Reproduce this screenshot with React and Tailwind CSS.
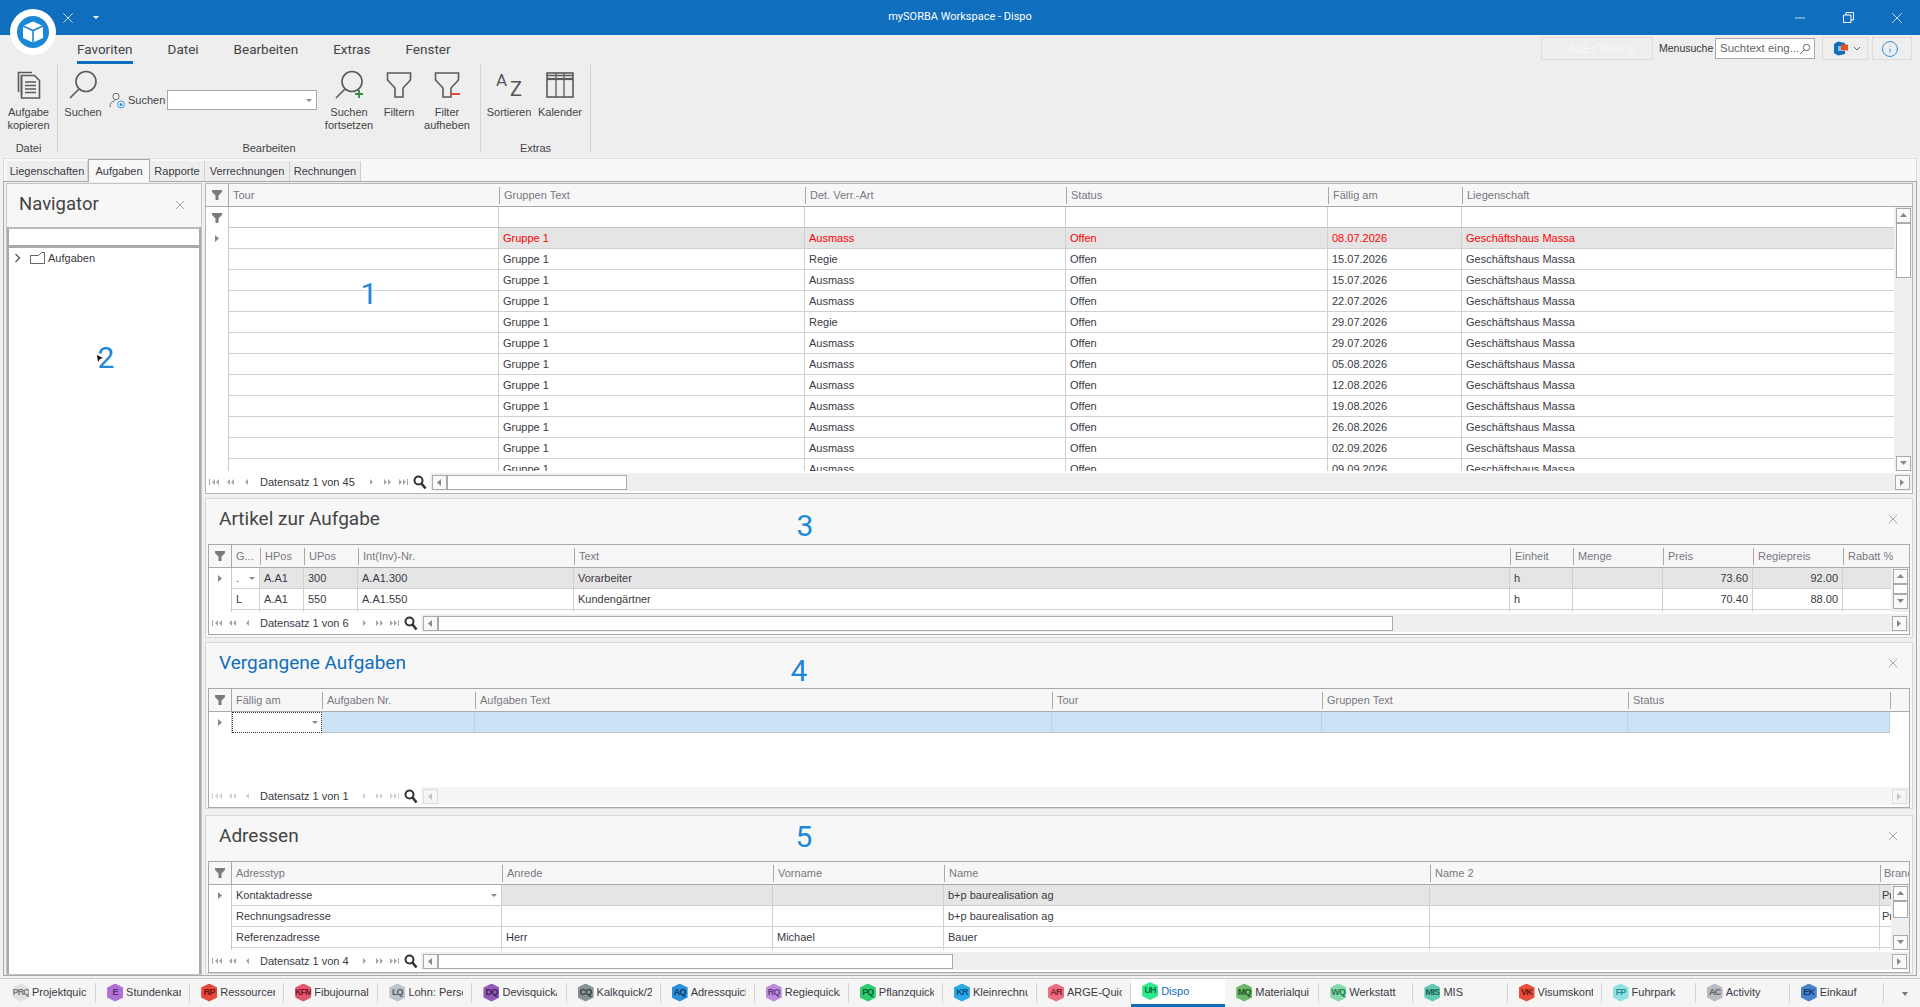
import { Info, Minus, X } from "lucide-react";

const ROW_TEXT = "text-[#3a3a44]";

const BOTTOM_TABS = [
  ["PRQ", "Projektquic", "bg-[#dfe2e5]", "text-[#777]"],
  ["E", "Stundenkar", "bg-[#b071d4]", "text-[#5b2c77]"],
  ["RP", "Ressourcer", "bg-[#e4483a]", "text-[#6b150e]"],
  ["KFM", "Fibujournal", "bg-[#e2566c]", "text-[#7a1526]"],
  ["LQ", "Lohn: Persc", "bg-[#bcc3c9]", "text-[#4e5a63]"],
  ["DQ", "Devisquick/", "bg-[#9259b8]", "text-[#3e1c58]"],
  ["CQ", "Kalkquick/2", "bg-[#869294]", "text-[#2d3a3c]"],
  ["AQ", "Adressquicl", "bg-[#2b90da]", "text-[#0a3a60]"],
  ["RQ", "Regiequick/", "bg-[#bb8cdc]", "text-[#643a84]"],
  ["PQ", "Pflanzquick", "bg-[#2ecc71]", "text-[#0a5c2c]"],
  ["KR", "Kleinrechnu", "bg-[#29a9e8]", "text-[#07507a]"],
  ["AR", "ARGE-Quicl", "bg-[#e96d7d]", "text-[#7c1e2c]"],
  ["UH", "Dispo", "bg-[#2ee88a]", "text-[#07703a]", true],
  ["MQ", "Materialqui", "bg-[#6cb86c]", "text-[#1e5a1e]"],
  ["WQ", "Werkstatt", "bg-[#82d8aa]", "text-[#2a7a50]"],
  ["MIS", "MIS", "bg-[#62c9b2]", "text-[#17664f]"],
  ["VK", "Visumskont", "bg-[#e74c3c]", "text-[#70140b]"],
  ["FP", "Fuhrpark", "bg-[#90e2e2]", "text-[#2a8a8a]"],
  ["AC", "Activity", "bg-[#b9bdc1]", "text-[#5a6066]"],
  ["EK", "Einkauf", "bg-[#4a82ca]", "text-[#123a70]"],
];

const TOUR_COLS = [
  { title: "Tour", w: "w-[270px]" },
  { title: "Gruppen Text", w: "w-[306px]" },
  { title: "Det. Verr.-Art", w: "w-[261px]" },
  { title: "Status", w: "w-[262px]" },
  { title: "Fällig am", w: "w-[134px]" },
  { title: "Liegenschaft", w: "w-[470px]" },
];

const TOUR_ROWS = [
  ["Ausmass", "08.07.2026"],
  ["Regie", "15.07.2026"],
  ["Ausmass", "15.07.2026"],
  ["Ausmass", "22.07.2026"],
  ["Regie", "29.07.2026"],
  ["Ausmass", "29.07.2026"],
  ["Ausmass", "05.08.2026"],
  ["Ausmass", "12.08.2026"],
  ["Ausmass", "19.08.2026"],
  ["Ausmass", "26.08.2026"],
  ["Ausmass", "02.09.2026"],
  ["Ausmass", "09.09.2026"],
].map(([art, date]) => ["", "Gruppe 1", art, "Offen", date, "Geschäftshaus Massa"]);

const ARTICLE_COLS = [
  { title: "G...", w: "w-[28px]" },
  { title: "HPos", w: "w-[44px]" },
  { title: "UPos", w: "w-[54px]" },
  { title: "Int(Inv)-Nr.", w: "w-[216px]" },
  { title: "Text", w: "w-[936px]" },
  { title: "Einheit", w: "w-[63px]" },
  { title: "Menge", w: "w-[90px]" },
  { title: "Preis", w: "w-[90px]", right: true },
  { title: "Regiepreis", w: "w-[90px]", right: true },
  { title: "Rabatt %", w: "w-[68px]", right: true },
];

const ARTICLE_ROWS = [
  [".", "A.A1", "300", "A.A1.300", "Vorarbeiter", "h", "", "73.60", "92.00", ""],
  ["L", "A.A1", "550", "A.A1.550", "Kundengärtner", "h", "", "70.40", "88.00", ""],
  ["", "", "", "", "", "", "", "", "", ""],
];

const PAST_COLS = [
  { title: "Fällig am", w: "w-[90px]" },
  { title: "Aufgaben Nr.", w: "w-[153px]" },
  { title: "Aufgaben Text", w: "w-[577px]" },
  { title: "Tour", w: "w-[270px]" },
  { title: "Gruppen Text", w: "w-[306px]" },
  { title: "Status", w: "w-[262px]" },
  { title: "", w: "w-[20px]" },
];

const ADDRESS_COLS = [
  { title: "Adresstyp", w: "w-[270px]" },
  { title: "Anrede", w: "w-[271px]" },
  { title: "Vorname", w: "w-[171px]" },
  { title: "Name", w: "w-[486px]" },
  { title: "Name 2", w: "w-[450px]" },
  { title: "Branche", w: "w-[60px]", tight: true },
];

const ADDRESS_ROWS = [
  ["Kontaktadresse", "", "", "b+p baurealisation ag", "", "Pr"],
  ["Rechnungsadresse", "", "", "b+p baurealisation ag", "", "Pr"],
  ["Referenzadresse", "Herr", "Michael", "Bauer", "", ""],
  ["", "", "", "", "", ""],
];

function Funnel({ className = "" }) {
  return (
    <svg viewBox="0 0 12 12" className={`h-3 w-3 ${className}`}>
      <path d="M1 1h10v2L7.5 6.5V11h-3V6.5L1 3z" fill="#7b7b7b" />
    </svg>
  );
}

function Caret({ dir = "right", color = "#888", className = "" }) {
  const paths = {
    right: "M2 1l4 3.5L2 8z",
    left: "M6 1L2 4.5 6 8z",
    up: "M1 6l3.5-4L8 6z",
    down: "M1 2l3.5 4L8 2z",
  };
  return (
    <svg viewBox="0 0 9 9" className={`h-[9px] w-[9px] ${className}`}>
      <path d={paths[dir]} fill={color} />
    </svg>
  );
}

function DropArrow() {
  return <span className="h-0 w-0 border-x-[3px] border-t-[3px] border-x-transparent border-t-[#8a8a8a]" />;
}

function NavGlyph({ kind, muted }) {
  const c = muted ? "#d0d0d0" : "#a5a5a5";
  const glyphs = {
    first: "M1 2h1v6H1zM7 2v6L4 5zM11 2v6L8 5z",
    prevPage: "M6 2v6L3 5zM10 2v6L7 5z",
    prev: "M8 2v6L5 5z",
    next: "M5 2v6l3-3z",
    nextPage: "M3 2v6l3-3zM7 2v6l3-3z",
    last: "M2 2v6l3-3zM6 2v6l3-3zM10 2h1v6h-1z",
  };
  return (
    <svg viewBox="0 0 12 10" className="h-[10px] w-3">
      <path d={glyphs[kind]} fill={c} />
    </svg>
  );
}

function MagnifierBold() {
  return (
    <svg viewBox="0 0 14 15" className="h-[15px] w-[14px]">
      <circle cx="5.5" cy="5.5" r="4" fill="none" stroke="#333" strokeWidth="2" />
      <path d="M8.5 8.5l4 5" stroke="#333" strokeWidth="2.6" />
    </svg>
  );
}

function ScrollBtn({ dir, muted, className = "" }) {
  return (
    <span className={`flex h-[15px] w-[15px] shrink-0 items-center justify-center border ${muted ? "border-[#dddddd] bg-[#f5f5f5]" : "border-[#aaaaaa] bg-[#f9f9f9]"} ${className}`}>
      <Caret dir={dir} color={muted ? "#c4c4c4" : "#888"} />
    </span>
  );
}

function VScrollBar({ thumbH, downGap }) {
  return (
    <div className="flex w-[18px] shrink-0 flex-col items-center bg-[#efefef] pt-[1px]">
      <ScrollBtn dir="up" />
      <span className={`w-[15px] border border-[#aaaaaa] bg-white ${thumbH}`} />
      <span className={downGap} />
      <ScrollBtn dir="down" />
    </div>
  );
}

function Pager({ label, textW, iconW, muted, thumb, wide }) {
  return (
    <div className="flex h-[22px] shrink-0 items-center bg-white">
      {["first", "prevPage", "prev"].map((k) => (
        <span key={k} className={`flex shrink-0 justify-center ${iconW}`}>
          <NavGlyph kind={k} muted={muted} />
        </span>
      ))}
      <span className={`ml-[6px] shrink-0 whitespace-nowrap text-[11px] ${ROW_TEXT} ${textW}`}>{label}</span>
      <span className="w-[8px] shrink-0" />
      {["next", "nextPage", "last"].map((k) => (
        <span key={k} className={`flex shrink-0 justify-center ${iconW}`}>
          <NavGlyph kind={k} muted={muted} />
        </span>
      ))}
      <span className={`shrink-0 ${wide ? "ml-[2px]" : "ml-[3px]"}`}>
        <MagnifierBold />
      </span>
      <div className={`ml-[3px] flex h-[18px] flex-1 items-center pl-[2px] pr-[2px] ${muted ? "bg-[#f5f5f5]" : "bg-[#efefef]"}`}>
        <ScrollBtn dir="left" muted={muted} />
        {thumb && <span className={`h-[15px] border border-[#aaaaaa] bg-white ${thumb}`} />}
        <ScrollBtn dir="right" muted={muted} className="ml-auto" />
      </div>
    </div>
  );
}

function HeaderRow({ cols, indicatorW }) {
  return (
    <div className="flex h-[23px] shrink-0 overflow-hidden border-b border-[#a9a9a9] bg-[#f7f7f7]">
      <div className={`flex shrink-0 items-center justify-center border-r border-[#a9a9a9] ${indicatorW}`}>
        <Funnel />
      </div>
      {cols.map((c, i) => (
        <div key={c.title} className={`flex shrink-0 items-center overflow-hidden ${c.w}`}>
          {i > 0 && <span className={`h-[17px] w-px shrink-0 bg-[#a9a9a9] ${c.tight ? "mr-[3px]" : "mr-[4px]"}`} />}
          <span className={`whitespace-nowrap text-[11px] text-[#77777f] ${i === 0 ? "pl-[4px]" : ""}`}>{c.title}</span>
        </div>
      ))}
    </div>
  );
}

function DataRow({ cols, values, indicatorW, arrow, rowBg = "", rowText = ROW_TEXT, firstCell, h = "h-[21px]" }) {
  return (
    <div className={`flex shrink-0 ${h}`}>
      <div className={`flex shrink-0 items-center justify-center border-r border-[#c9c9c9] bg-white ${indicatorW}`}>
        {arrow && <Caret />}
      </div>
      <div className={`flex flex-1 border-b border-[#d0d0d0] ${rowBg}`}>
        {cols.map((c, i) => (
          <div
            key={c.title}
            className={`flex shrink-0 items-center justify-between overflow-hidden whitespace-nowrap border-r border-[#d0d0d0] text-[11px] ${c.tight ? "px-[2px]" : "px-[4px]"} ${c.w} ${c.right ? "justify-end" : ""} ${i === 0 && firstCell ? "bg-white" : ""} ${rowText}`}
          >
            {values[i]}
            {i === 0 && firstCell === "drop" && <span className="flex"><DropArrow /></span>}
          </div>
        ))}
      </div>
    </div>
  );
}

function Panel({ title, active, children }) {
  return (
    <section className="shrink-0 border border-[#d8d8d8] bg-[#f7f7f7]">
      <div className="flex h-[45px] items-center justify-between pb-[5px] pl-[13px] pr-[11px]">
        <h2 className={`font-['Roboto',sans-serif] text-[19px] font-normal ${active ? "text-[#106ebe]" : "text-[#444]"}`}>{title}</h2>
        <X className="h-[16px] w-[16px] text-[#8a8a8a]" strokeWidth={1.1} />
      </div>
      {children}
    </section>
  );
}

function TourGrid() {
  return (
    <div className="flex h-[311px] shrink-0 flex-col border border-[#b5b5b5] bg-white">
      <HeaderRow cols={TOUR_COLS} indicatorW="w-[23px]" />
      <div className="flex h-[264px] shrink-0 overflow-hidden">
        <div className="min-w-0 flex-1 overflow-hidden">
          <div className="flex h-[21px]">
            <div className="flex w-[23px] shrink-0 items-center justify-center border-r border-[#c9c9c9]">
              <Funnel />
            </div>
            <div className="flex flex-1 border-b border-[#c4c4c4]">
              {TOUR_COLS.map((c) => (
                <div key={c.title} className={`shrink-0 border-r border-[#d0d0d0] ${c.w}`} />
              ))}
            </div>
          </div>
          {TOUR_ROWS.map((r, i) => (
            <DataRow
              key={r[4]}
              cols={TOUR_COLS}
              values={r}
              indicatorW="w-[23px]"
              arrow={i === 0}
              rowBg={i === 0 ? "bg-[#e5e5e5]" : ""}
              rowText={i === 0 ? "text-[#ff0000]" : ROW_TEXT}
              firstCell={i === 0 ? "plain" : undefined}
            />
          ))}
        </div>
        <VScrollBar thumbH="h-[55px]" downGap="flex-1" />
      </div>
      <Pager label="Datensatz 1 von 45" textW="w-[95px]" iconW="w-[16px]" thumb="w-[180px]" wide />
    </div>
  );
}

function ArticleGrid() {
  return (
    <div className="mx-[2px] mb-[2px] flex h-[91px] flex-col border border-[#a9a9a9] bg-white">
      <HeaderRow cols={ARTICLE_COLS} indicatorW="w-[23px]" />
      <div className="flex h-[44px] shrink-0 overflow-hidden">
        <div className="min-w-0 flex-1 overflow-hidden">
          {ARTICLE_ROWS.map((r, i) => (
            <DataRow
              key={i}
              cols={ARTICLE_COLS}
              values={r}
              indicatorW="w-[23px]"
              arrow={i === 0}
              rowBg={i === 0 ? "bg-[#e5e5e5]" : ""}
              firstCell={i === 0 ? "drop" : undefined}
            />
          ))}
        </div>
        <VScrollBar thumbH="h-[10px]" downGap="" />
      </div>
      <Pager label="Datensatz 1 von 6" textW="w-[88px]" iconW="w-[15px]" thumb="w-[955px]" />
    </div>
  );
}

function PastGrid() {
  return (
    <div className="mx-[2px] flex h-[120px] flex-col border border-[#a9a9a9] bg-white">
      <HeaderRow cols={PAST_COLS} indicatorW="w-[23px]" />
      <div className="h-[73px] shrink-0 overflow-hidden">
        <div className="flex h-[21px]">
          <div className="flex w-[23px] shrink-0 items-center justify-center border-r border-[#c9c9c9]">
            <Caret />
          </div>
          <div className="flex w-[90px] items-center justify-end border border-dotted border-[#333] pr-[3px]">
            <DropArrow />
          </div>
          <div className="flex border-b border-[#c4c4c4] bg-[#cbe3f6]">
            {PAST_COLS.slice(1, 6).map((c) => (
              <div key={c.title} className={`shrink-0 border-r border-[#bcd3e4] ${c.w}`} />
            ))}
          </div>
        </div>
      </div>
      <Pager label="Datensatz 1 von 1" textW="w-[88px]" iconW="w-[15px]" muted />
    </div>
  );
}

function AddressGrid() {
  return (
    <div className="mx-[2px] flex h-[112px] flex-col border border-[#a9a9a9] bg-white">
      <HeaderRow cols={ADDRESS_COLS} indicatorW="w-[23px]" />
      <div className="flex h-[65px] shrink-0 overflow-hidden">
        <div className="min-w-0 flex-1 overflow-hidden">
          {ADDRESS_ROWS.map((r, i) => (
            <DataRow
              key={i}
              cols={ADDRESS_COLS}
              values={r}
              indicatorW="w-[23px]"
              arrow={i === 0}
              rowBg={i === 0 ? "bg-[#e5e5e5]" : ""}
              firstCell={i === 0 ? "drop" : undefined}
            />
          ))}
        </div>
        <VScrollBar thumbH="h-[17px]" downGap="flex-1" />
      </div>
      <Pager label="Datensatz 1 von 4" textW="w-[88px]" iconW="w-[15px]" thumb="w-[515px]" />
    </div>
  );
}

function Navigator() {
  return (
    <aside className="flex w-[196px] shrink-0 flex-col border border-[#c4c4c4] bg-[#f7f7f7]">
      <div className="flex h-[43px] shrink-0 items-center justify-between pb-[2px] pl-[12px] pr-[13px]">
        <h2 className="font-['Roboto',sans-serif] text-[18.5px] font-normal text-[#444]">Navigator</h2>
        <X className="h-[16px] w-[16px] text-[#8a8a8a]" strokeWidth={1.1} />
      </div>
      <div className="h-[21px] shrink-0 border-2 border-b-[3px] border-[#a9a9a9] border-t-[#bbbbbb] bg-white" />
      <div className="flex-1 border-x-2 border-[#a9a9a9] bg-white pl-[3px]">
        <div className="flex h-[20px] items-center">
          <svg viewBox="0 0 8 10" className="ml-[2px] h-[10px] w-[8px]">
            <path d="M1.5 1l4 4-4 4" fill="none" stroke="#555" strokeWidth="1.3" />
          </svg>
          <svg viewBox="0 0 15 12" className="ml-[8px] h-[12px] w-[15px]">
            <path d="M.5 3.5h8l3-3h3v11H.5z" fill="none" stroke="#666" />
          </svg>
          <span className={`ml-[3px] text-[11px] ${ROW_TEXT}`}>Aufgaben</span>
        </div>
      </div>
    </aside>
  );
}

function RibbonLabel({ children }) {
  return <div className="h-[15px] text-center text-[11px] leading-[23px] text-[#444]">{children}</div>;
}

function RibbonBtn({ w, icon, lines }) {
  return (
    <div className={`flex shrink-0 flex-col items-center pt-[5px] ${w}`}>
      <div className="flex h-[30px] items-center justify-center">{icon}</div>
      <div className="mt-[6px] text-center text-[11px] leading-[13px] text-[#444]">
        {lines.map((l) => (
          <div key={l}>{l}</div>
        ))}
      </div>
    </div>
  );
}

const iconStroke = { fill: "none", stroke: "#5a5a5a", strokeWidth: 1.6 };

const Lens = ({ children }) => (
  <svg viewBox="0 0 30 30" className="h-[30px] w-[30px]">
    <circle cx="18" cy="11.5" r="10" {...iconStroke} />
    <path d="M11 19L2 28" {...iconStroke} />
    {children}
  </svg>
);

const FunnelOutline = ({ children }) => (
  <svg viewBox="0 0 26 30" className="h-[30px] w-[26px]">
    <path d="M1.5 3h23v7L17 18v9H9v-9L1.5 10z" {...iconStroke} />
    {children}
  </svg>
);

function CopyIcon() {
  return (
    <svg viewBox="0 0 24 30" className="h-[30px] w-[24px]">
      <path d="M4.5 25V5.5M1.5 22V2.5H15" {...iconStroke} />
      <path d="M4.5 5.5h13l5 5V28H4.5z" {...iconStroke} />
      <path d="M8 12h11M8 15.5h11M8 19h11M8 22.5h11" {...iconStroke} strokeWidth="1.3" />
    </svg>
  );
}

function CalendarIcon() {
  return (
    <svg viewBox="0 0 28 26" className="h-[26px] w-[28px]">
      <rect x="1" y="1" width="26" height="24" {...iconStroke} />
      <path d="M1 7h26" {...iconStroke} strokeWidth="2.2" />
      <path d="M1 3.5h26M10 1v24M18 1v24" {...iconStroke} strokeWidth="1.3" />
    </svg>
  );
}

function SortIcon() {
  return (
    <div className="relative h-[28px] w-[26px] font-['Roboto',sans-serif] text-[#555]">
      <span className="absolute left-0 top-[1px] text-[17px] leading-none">A</span>
      <span className="absolute bottom-0 right-0 text-[20px] leading-none">Z</span>
    </div>
  );
}

function UserSearchIcon() {
  return (
    <svg viewBox="0 0 16 17" className="h-[17px] w-[16px]">
      <circle cx="7" cy="4.5" r="3.2" fill="none" stroke="#6a6a6a" />
      <path d="M1 15c0-4 2-6 5-6" fill="none" stroke="#6a6a6a" />
      <circle cx="12" cy="12.5" r="3.4" fill="#fff" stroke="#2b8fdb" />
      <circle cx="12" cy="12.5" r="1.6" fill="#2b8fdb" />
    </svg>
  );
}

function OfficeIcon() {
  return (
    <svg viewBox="0 0 16 15" className="h-[15px] w-[16px]">
      <path d="M5 .5L12 2v3H8v5h4v3l-7 1.5L1 12V3z" fill="#106ebe" />
      <path d="M5 5h3v5H5z" fill="#7fc0ee" />
      <rect x="8" y="3.5" width="7" height="6" fill="#e8501f" />
    </svg>
  );
}

function TopTabs() {
  const items = ["Favoriten", "Datei", "Bearbeiten", "Extras", "Fenster"];
  return (
    <div className="flex h-[30px] shrink-0 items-start pl-[77px] pt-[2px]">
      <div className="flex gap-[35px] pt-px font-['Roboto',sans-serif] text-[13.5px] leading-[22px] text-[#444]">
        {items.map((t, i) => (
          <div key={t} className={`h-[23px] ${i === 0 ? "box-content border-b-[3px] border-[#106ebe]" : ""}`}>
            {t}
          </div>
        ))}
      </div>
      <div className="ml-auto flex items-center pr-[8px]">
        <div className="flex h-[23px] w-[112px] items-center justify-center border border-[#dcdcdc] pl-[10px] text-[12px] text-[#f7f7f7]">
          AaEsTesting
        </div>
        <span className="ml-[6px] w-[53px] whitespace-nowrap text-[10.5px] text-[#333]">Menusuche</span>
        <div className="ml-[3px] flex h-[21px] w-[100px] items-center justify-between border border-[#a9a9a9] bg-white pl-[4px] pr-[3px]">
          <span className="whitespace-nowrap text-[11.5px] text-[#666]">Suchtext eing...</span>
          <svg viewBox="0 0 12 12" className="h-3 w-3 shrink-0">
            <circle cx="7.5" cy="4.5" r="3.2" fill="none" stroke="#666" />
            <path d="M5 7l-4 4" stroke="#666" />
          </svg>
        </div>
        <div className="ml-[7px] flex h-[23px] w-[46px] items-center gap-[4px] border border-[#dcdcdc] pl-[10px]">
          <OfficeIcon />
          <svg viewBox="0 0 8 5" className="h-[5px] w-[8px]">
            <path d="M1 1l3 3 3-3" fill="none" stroke="#666" />
          </svg>
        </div>
        <div className="ml-[4px] flex h-[23px] w-[40px] items-center border border-[#dcdcdc] pl-[8px]">
          <Info className="h-[18px] w-[18px] text-[#2b8fdb]" strokeWidth={1.3} />
        </div>
      </div>
    </div>
  );
}

function Ribbon() {
  return (
    <div className="flex h-[121px] shrink-0 flex-col bg-[#eeeeee]">
      <TopTabs />
      <div className="flex h-[87px] shrink-0">
        <div className="flex w-[58px] shrink-0 flex-col border-r border-[#d4d4d4]">
          <div className="flex flex-1">
            <RibbonBtn w="w-[57px]" icon={<CopyIcon />} lines={["Aufgabe", "kopieren"]} />
          </div>
          <RibbonLabel>Datei</RibbonLabel>
        </div>
        <div className="flex w-[423px] shrink-0 flex-col border-r border-[#d4d4d4]">
          <div className="flex flex-1">
            <RibbonBtn w="w-[50px]" icon={<Lens />} lines={["Suchen"]} />
            <div className="flex w-[216px] shrink-0 items-start pl-[1px] pt-[25px]">
              <div className="flex h-[20px] items-center">
                <UserSearchIcon />
                <span className="ml-[3px] w-[39px] text-[11px] text-[#444]">Suchen</span>
                <div className="flex h-[20px] w-[150px] items-center justify-end border border-[#a9a9a9] bg-white pr-[4px]">
                  <DropArrow />
                </div>
              </div>
            </div>
            <RibbonBtn
              w="w-[50px]"
              icon={
                <Lens>
                  <path d="M21 24h8M25 20v8" stroke="#2e8b45" strokeWidth="1.8" />
                </Lens>
              }
              lines={["Suchen", "fortsetzen"]}
            />
            <RibbonBtn w="w-[50px]" icon={<FunnelOutline />} lines={["Filtern"]} />
            <RibbonBtn
              w="w-[46px]"
              icon={
                <FunnelOutline>
                  <path d="M16 24h10" stroke="#e04b3a" strokeWidth="2" />
                </FunnelOutline>
              }
              lines={["Filter", "aufheben"]}
            />
          </div>
          <RibbonLabel>Bearbeiten</RibbonLabel>
        </div>
        <div className="flex w-[110px] shrink-0 flex-col border-r border-[#d4d4d4]">
          <div className="flex flex-1">
            <RibbonBtn w="w-[56px]" icon={<SortIcon />} lines={["Sortieren"]} />
            <RibbonBtn w="w-[46px]" icon={<CalendarIcon />} lines={["Kalender"]} />
          </div>
          <RibbonLabel>Extras</RibbonLabel>
        </div>
      </div>
    </div>
  );
}

function TitleBar() {
  return (
    <header className="flex h-[35px] shrink-0 items-center bg-[#106ebe] text-white">
      <div className="flex w-[240px] items-center pl-[59px]">
        <X className="h-[18px] w-[18px]" strokeWidth={1} />
        <span className="ml-[16px] h-0 w-0 border-x-[3px] border-t-[3px] border-x-transparent border-t-white" />
      </div>
      <div className="flex-1 text-center font-['Roboto',sans-serif] text-[11px]">mySORBA Workspace - Dispo</div>
      <div className="flex w-[240px] items-center justify-end pr-[14px]">
        <Minus className="h-[16px] w-[16px]" strokeWidth={1.1} />
        <svg viewBox="0 0 11 11" className="ml-[35px] h-[11px] w-[11px]">
          <path d="M.5 3h7.5v7.5H.5zM3 3V.5h7.5V8H8" fill="none" stroke="#fff" />
        </svg>
        <X className="ml-[34px] h-[18px] w-[18px]" strokeWidth={1} />
      </div>
    </header>
  );
}

function SubTabs() {
  const tabs = ["Liegenschaften", "Aufgaben", "Rapporte", "Verrechnungen", "Rechnungen"];
  const widths = ["w-[81px]", "w-[62px]", "w-[55px]", "w-[85px]", "w-[71px]"];
  return (
    <div className="flex h-[23px] shrink-0 items-end border border-b-0 border-[#dcdcdc] bg-[#f8f8f8] pl-[3px]">
      {tabs.map((t, i) =>
        i === 1 ? (
          <div key={t} className={`z-10 -mb-px flex h-[23px] items-center justify-center border border-b-0 border-[#a9a9a9] bg-[#f8f8f8] text-[11px] ${ROW_TEXT} ${widths[i]}`}>
            {t}
          </div>
        ) : (
          <div key={t} className={`flex h-[20px] items-center justify-center border-r border-[#d0d0d0] bg-[#eeeeee] text-[11px] ${ROW_TEXT} ${widths[i]}`}>
            {t}
          </div>
        )
      )}
    </div>
  );
}

function BottomBar() {
  return (
    <footer className="flex h-[29px] shrink-0 items-stretch border-t border-[#cccccc] bg-[#f5f5f5] pl-[2px]">
      {BOTTOM_TABS.map(([badge, label, bg, fg, active]) => (
        <div
          key={badge}
          className={`flex w-[94.1px] shrink-0 items-center overflow-hidden pb-[1px] pl-[11px] ${active ? "border-b-[3px] border-[#106ebe] bg-white" : "relative after:absolute after:right-0 after:top-[4px] after:h-[20px] after:w-px after:bg-[#d4d4d4]"}`}
        >
          <span
            className={`flex h-[18px] w-[16px] shrink-0 items-center justify-center text-[9px] font-bold tracking-[-0.8px] [clip-path:polygon(50%_0,100%_22%,100%_78%,50%_100%,0_78%,0_22%)] ${bg} ${fg}`}
          >
            {badge}
          </span>
          <span className={`ml-[3px] w-[55px] overflow-hidden whitespace-nowrap text-[11px] ${active ? "text-[#106ebe]" : ROW_TEXT}`}>{label}</span>
        </div>
      ))}
      <div className="ml-auto flex w-[30px] items-center justify-center pt-[2px]">
        <span className="h-0 w-0 border-x-[3px] border-t-[4px] border-x-transparent border-t-[#777]" />
      </div>
    </footer>
  );
}

function Marker({ className, children }) {
  return (
    <span className={`pointer-events-none absolute z-20 -translate-x-1/2 -translate-y-1/2 font-['Roboto',sans-serif] text-[30px] leading-none text-[#1e88d8] [text-shadow:0_0_4px_#fff,0_0_4px_#fff] ${className}`}>
      {children}
    </span>
  );
}

export default function App() {
  return (
    <div className="relative flex h-[1007px] w-[1920px] flex-col overflow-hidden bg-[#f2f2f2] font-['Liberation_Sans',Arial,sans-serif]">
      <TitleBar />
      <Ribbon />

      {/* app logo hangs over the ribbon */}
      <div className="absolute left-[10px] top-[9px] z-10 flex h-[46px] w-[46px] items-center justify-center rounded-full bg-white">
        <div className="flex h-[32px] w-[32px] items-center justify-center rounded-full bg-[#1b87d6]">
          <svg viewBox="0 0 24 24" className="h-[24px] w-[24px]">
            <path d="M12 1.5l10 4.5v12l-10 4.5L2 18V6z" fill="#fff" />
            <path d="M2 6l10 4.5L22 6M12 10.5v12" fill="none" stroke="#1b87d6" strokeWidth="1.6" />
          </svg>
        </div>
      </div>

      <main className="flex min-h-0 flex-1 flex-col px-[3px] pb-[2px] pt-[2px]">
        <SubTabs />
        <div className="flex min-h-0 flex-1 gap-[3px] border border-[#a9a9a9] bg-[#f0f0f0] pl-[2px] pr-[3px] pt-[1px]">
          <Navigator />
          <div className="flex min-w-0 flex-1 flex-col">
            <TourGrid />
            <div className="h-[4px] shrink-0" />
            <Panel title="Artikel zur Aufgabe">
              <ArticleGrid />
            </Panel>
            <div className="h-[4px] shrink-0" />
            <Panel title="Vergangene Aufgaben" active>
              <PastGrid />
            </Panel>
            <div className="h-[6px] shrink-0" />
            <Panel title="Adressen">
              <AddressGrid />
            </Panel>
          </div>
        </div>
      </main>

      <BottomBar />

      <Marker className="left-[369px] top-[294px]">1</Marker>
      <Marker className="left-[106px] top-[358px]">2</Marker>
      <Marker className="left-[805px] top-[526px]">3</Marker>
      <Marker className="left-[799px] top-[671px]">4</Marker>
      <Marker className="left-[804px] top-[837px]">5</Marker>
      <svg viewBox="0 0 8 9" className="absolute left-[96px] top-[354px] z-20 h-[9px] w-[8px]">
        <path d="M1 1l6 3-3 1-2 3z" fill="#111" />
      </svg>
    </div>
  );
}
